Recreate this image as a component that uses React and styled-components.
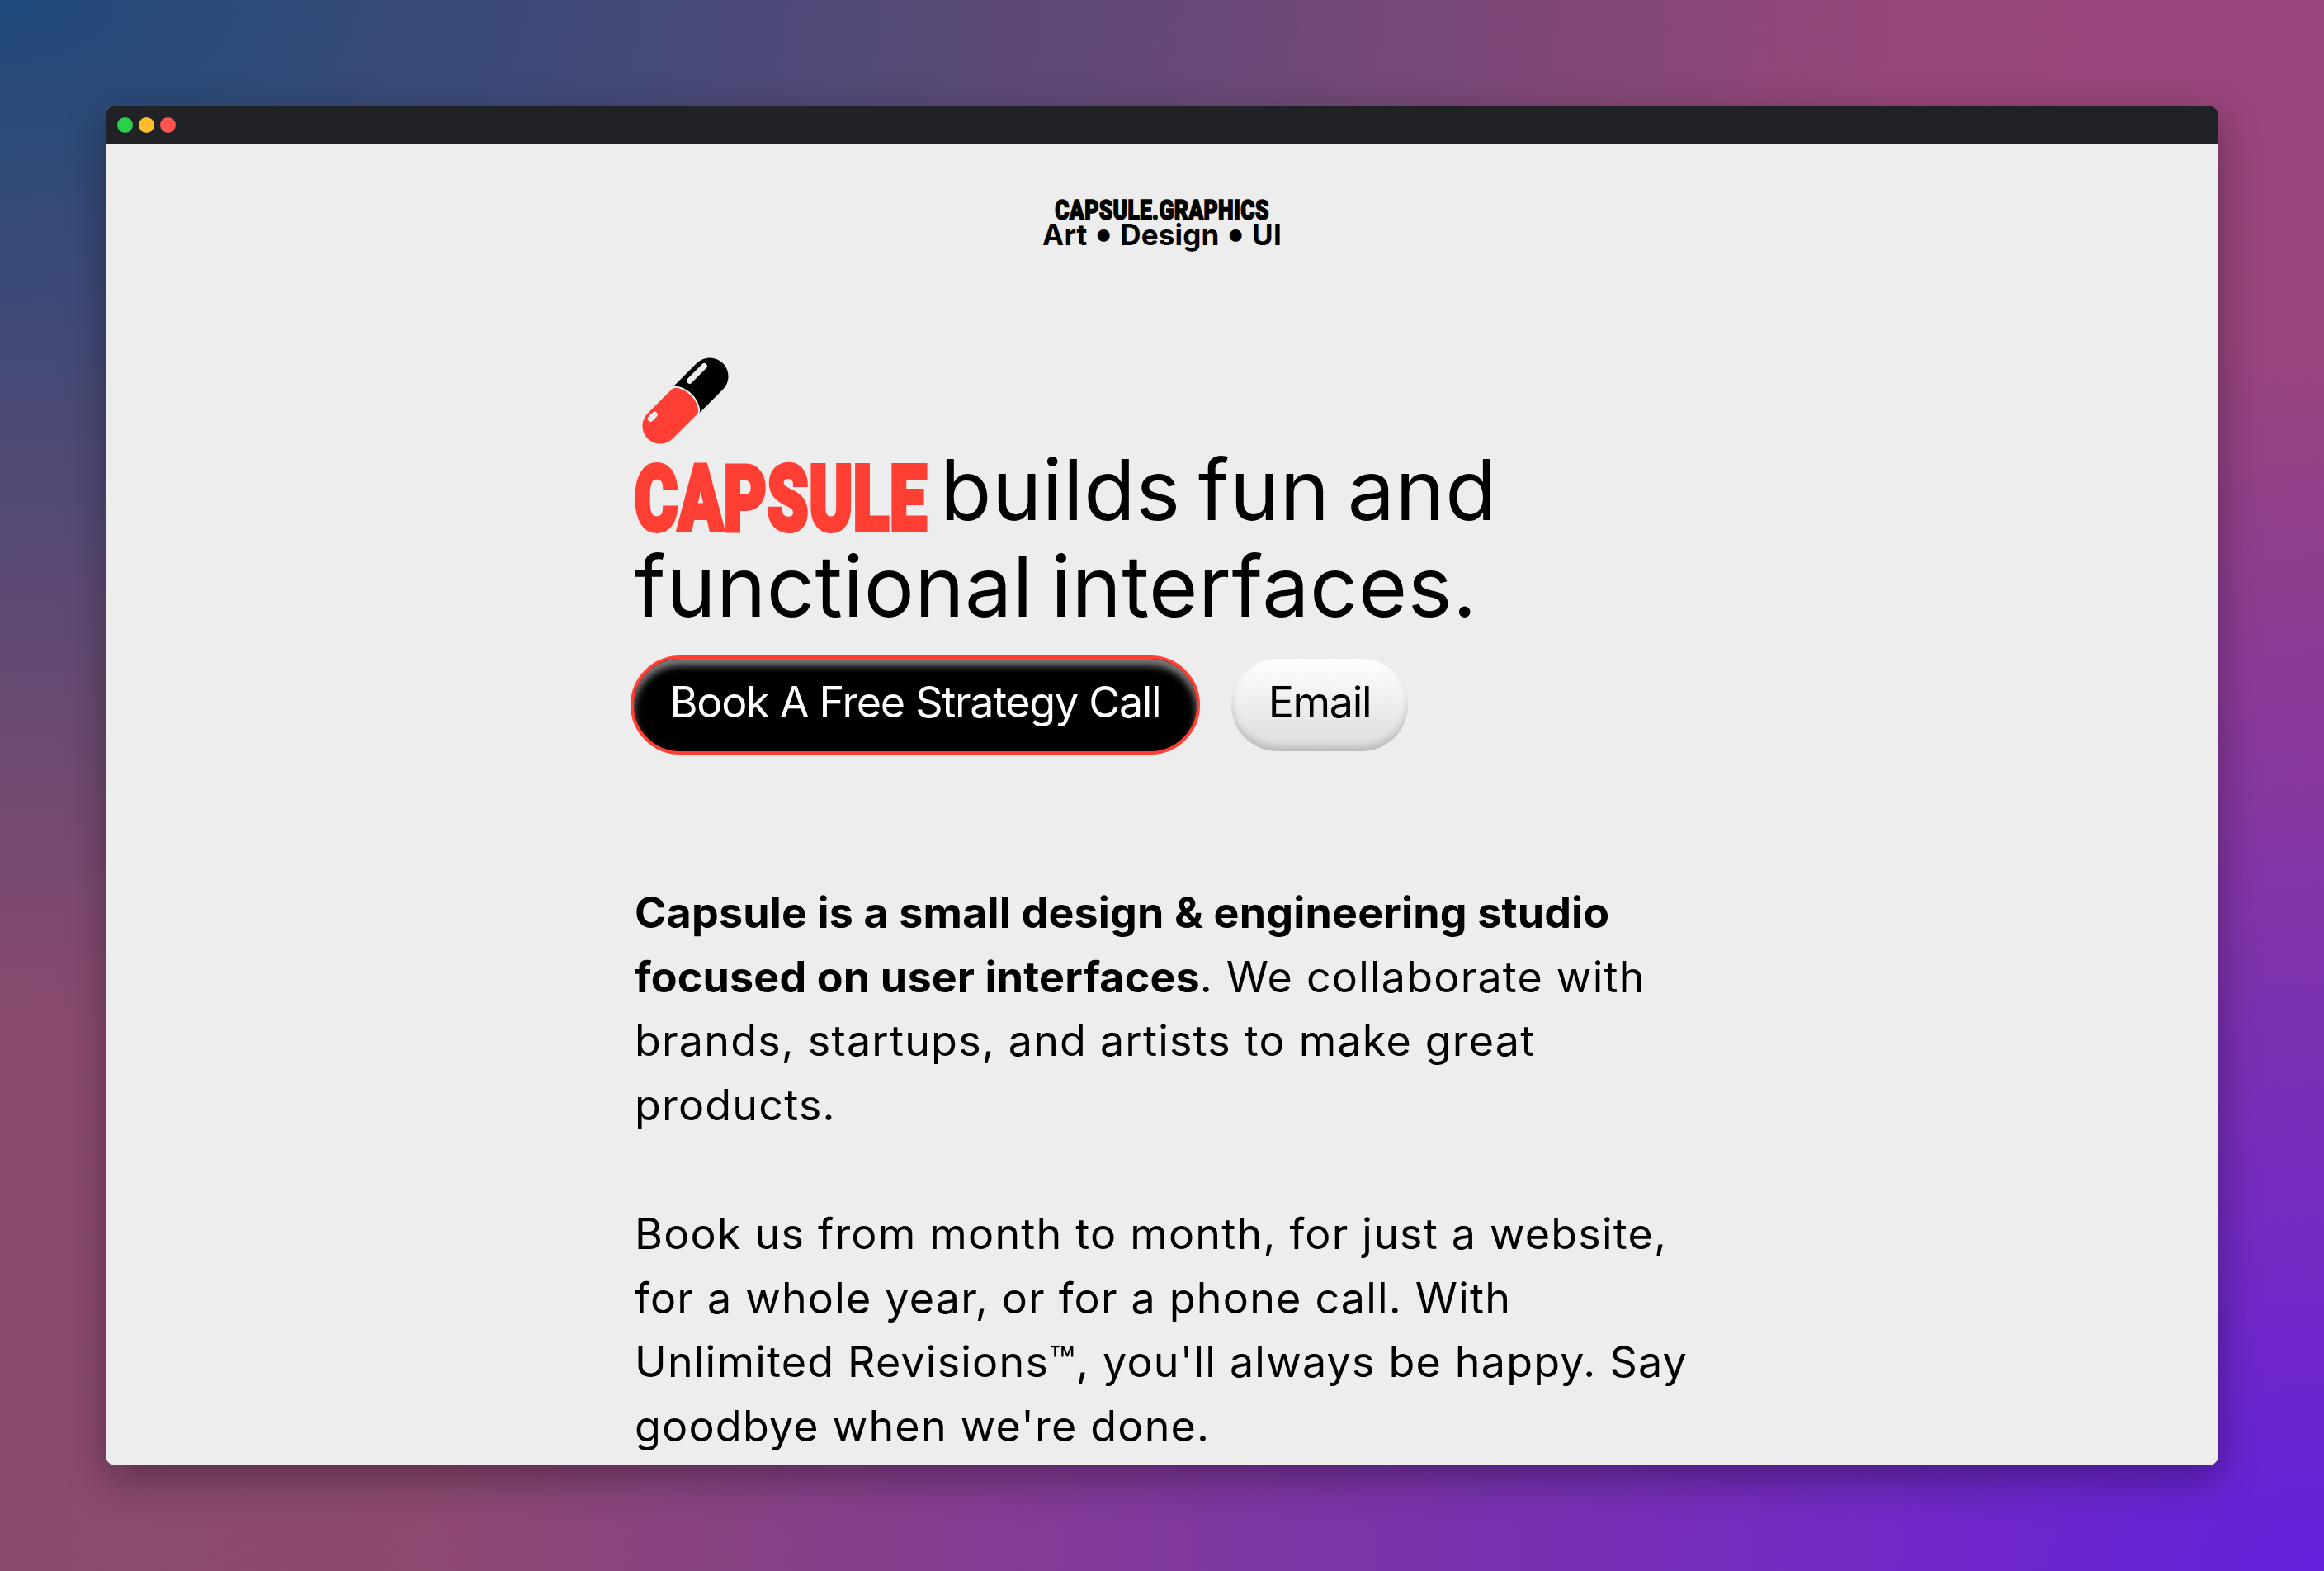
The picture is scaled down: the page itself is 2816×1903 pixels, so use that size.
import React from 'react';
import styled, { createGlobalStyle } from 'styled-components';

const Global = createGlobalStyle`
  html, body { margin: 0; padding: 0; height: 100%; overflow: hidden; }
  #root { height: 100%; }
`;

const Backdrop = styled.div`
  box-sizing: border-box;
  width: 2816px;
  height: 1903px;
  padding: 128px;
  background:
    radial-gradient(2300px 1250px at 0% 0%, #1f4a7a 0%, rgba(31,74,122,0) 100%),
    radial-gradient(2300px 1500px at 100% 100%, #6420dc 0%, rgba(100,32,220,0) 100%),
    linear-gradient(90deg, #8a4a6e 0%, #99457c 100%);
`;

const Window = styled.div`
  height: 100%;
  display: flex;
  flex-direction: column;
  border-radius: 12px;
  overflow: hidden;
  background: #ededed;
  box-shadow: 0 16px 48px rgba(0, 0, 0, 0.35);
`;

const TitleBar = styled.div`
  flex: none;
  height: 47px;
  background: #212226;
  display: flex;
  align-items: center;
  gap: 7px;
  padding-left: 14px;
`;

const Light = styled.span`
  width: 19px;
  height: 19px;
  border-radius: 50%;
  background: ${p => p.$color};
`;

const Content = styled.main`
  flex: 1;
  min-height: 0;
  overflow: hidden;
  color: #000;
  font-family: Inter, "Liberation Sans", sans-serif;
`;

const Logo = styled.header`
  padding-top: 64px;
  text-align: center;
`;

const LogoName = styled.div`
  font-family: Roboto, sans-serif;
  font-weight: 900;
  font-size: 33px;
  line-height: 32px;
  -webkit-text-stroke: 1.5px #000;
  letter-spacing: 0.4px;
  transform: scaleX(0.8);
`;

const LogoTag = styled.div`
  margin-top: -2px;
  font-weight: 700;
  font-size: 35px;
  line-height: 30px;
  letter-spacing: 0.2px;
`;

const Dot = styled.span`
  font-size: 1.35em;
  line-height: 0;
  vertical-align: -0.05em;
`;

const Column = styled.div`
  width: 1290px;
  margin: 0 0 0 641px;
`;

const Pill = styled.svg`
  display: block;
  width: 112px;
  height: 112px;
  margin: 131px 0 -8px 5px;
`;

const Headline = styled.h1`
  margin: 0;
  font-weight: 400;
  font-size: 102px;
  line-height: 117px;
  letter-spacing: 0.5px;
  word-spacing: -8px;
`;

const Brand = styled.span`
  display: inline-block;
  width: 352px;
  margin-right: 18px;
  white-space: nowrap;
  color: #ff3f34;
  font-family: Roboto, sans-serif;
  font-size: 110px;
  font-weight: 900;
  letter-spacing: 1.5px;
  -webkit-text-stroke: 6px #ff3f34;
  transform: scaleX(0.72) translateY(12px);
  transform-origin: left center;
`;

const Actions = styled.div`
  display: flex;
  align-items: center;
  gap: 38px;
  margin: 25px 0 0 -5px;
`;

const Primary = styled.a`
  box-sizing: border-box;
  width: 690px;
  height: 120px;
  padding-bottom: 7px;
  display: flex;
  align-items: center;
  justify-content: center;
  border-radius: 60px;
  border: 4px solid #ff3f34;
  background: #000;
  color: #fff;
  font-size: 52px;
  letter-spacing: -1.3px;
  box-shadow: inset 0 8px 10px rgba(255, 255, 255, 0.5);
`;

const Secondary = styled.a`
  box-sizing: border-box;
  width: 214px;
  height: 112px;
  padding-bottom: 7px;
  display: flex;
  align-items: center;
  justify-content: center;
  border-radius: 56px;
  background: linear-gradient(180deg, #ffffff 0%, #dcdcdc 100%);
  color: #000;
  font-size: 52px;
  letter-spacing: -1.3px;
  box-shadow: inset 0 -6px 8px rgba(0, 0, 0, 0.16);
`;

const Paragraph = styled.p`
  margin: 0;
  font-size: 52px;
  line-height: 77.7px;
  letter-spacing: 1.2px;
  & + & { margin-top: 78px; }
  strong { letter-spacing: 0.15px; }
`;

const Copy = styled.section`
  margin-top: 153px;
`;

export default function App() {
  return (
    <>
      <Global />
      <Backdrop>
        <Window>
          <TitleBar>
            <Light $color="#2bd14a" />
            <Light $color="#ffbd2e" />
            <Light $color="#ff5450" />
          </TitleBar>
          <Content>
            <Logo>
              <LogoName>CAPSULE.GRAPHICS</LogoName>
              <LogoTag>Art <Dot>•</Dot> Design <Dot>•</Dot> UI</LogoTag>
            </Logo>
            <Column>
              <Pill viewBox="-56 -56 112 112">
                <g transform="rotate(-45)">
                  <rect x="-65" y="-22.5" width="130" height="45" rx="22.5" fill="#000" />
                  <path d="M-42.5 -22.5 H-1 C6 -22.5 11 -10 11 0 C11 10 6 22.5 -1 22.5 H-42.5 A22.5 22.5 0 0 1 -42.5 -22.5 Z" fill="#ff3f34" stroke="#ededed" strokeWidth="2" />
                  <rect x="18" y="-17" width="32" height="7" rx="3.5" fill="#ededed" />
                  <rect x="-48" y="-18" width="14" height="7" rx="3.5" fill="#ededed" />
                </g>
              </Pill>
              <Headline>
                <Brand>CAPSULE</Brand>builds fun and<br />functional interfaces.
              </Headline>
              <Actions>
                <Primary>Book A Free Strategy Call</Primary>
                <Secondary>Email</Secondary>
              </Actions>
              <Copy>
                <Paragraph>
                  <strong>Capsule is a small design &amp; engineering studio focused on user interfaces</strong>. We collaborate with brands, startups, and artists to make great products.
                </Paragraph>
                <Paragraph>
                  Book us from month to month, for just a website, for a whole year, or for a phone call. With Unlimited Revisions™, you'll always be happy. Say goodbye when we're done.
                </Paragraph>
              </Copy>
            </Column>
          </Content>
        </Window>
      </Backdrop>
    </>
  );
}
